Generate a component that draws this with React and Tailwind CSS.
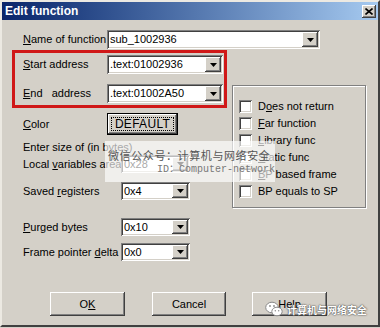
const raised =
  'shadow-[inset_-1px_-1px_0_#404040,inset_1px_1px_0_#ffffff,inset_-2px_-2px_0_#808080,inset_2px_2px_0_#d4d0c8]';
const sunken =
  'shadow-[inset_1px_1px_0_#808080,inset_-1px_-1px_0_#ffffff,inset_2px_2px_0_#404040,inset_-2px_-2px_0_#d4d0c8]';

function Combo({ value, className }) {
  return (
    <div className={`flex bg-white p-[2px] ${sunken} ${className}`}>
      <div className="flex-1 pl-[1px] flex items-center whitespace-nowrap overflow-hidden">{value}</div>
      <div className={`w-[16px] bg-[#d4d0c8] flex items-center justify-center ${raised}`}>
        <svg width="7" height="4" viewBox="0 0 7 4">
          <path d="M0 0h7L3.5 4z" fill="#000" />
        </svg>
      </div>
    </div>
  );
}

function Check({ children }) {
  return (
    <div className="h-[17px] flex items-center">
      <div className={`w-[13px] h-[13px] bg-white ${sunken}`} />
      <span className="ml-[6px] whitespace-nowrap">{children}</span>
    </div>
  );
}

function Btn({ children, className }) {
  return (
    <div className={`h-[24px] bg-[#d4d0c8] flex items-center justify-center ${raised} ${className}`}>
      {children}
    </div>
  );
}

function WeChat() {
  return (
    <svg width="18" height="16" viewBox="0 0 18 16">
      <ellipse cx="7" cy="6.5" rx="6.3" ry="5.3" fill="#fff" stroke="#888" strokeWidth="1" />
      <ellipse cx="12" cy="10.5" rx="5.2" ry="4.3" fill="#fff" stroke="#888" strokeWidth="1" />
      <circle cx="5" cy="5" r="0.9" fill="#888" />
      <circle cx="9" cy="5" r="0.9" fill="#888" />
      <circle cx="10.3" cy="9.8" r="0.7" fill="#888" />
      <circle cx="13.7" cy="9.8" r="0.7" fill="#888" />
    </svg>
  );
}

export default function App() {
  return (
    <div className="relative w-[380px] h-[328px] bg-[#d4d0c8] overflow-hidden font-['Liberation_Sans',Arial,sans-serif] text-[11px] text-black">
      <div className="h-[327px] border-2 border-t-[#ece9e2] border-l-[#ece9e2] border-r-[#404040] border-b-[#404040]">
        {/* title bar */}
        <div className="h-[18px] flex items-center pl-[3px] pr-[2px] bg-linear-to-r from-[#0a246a] to-[#a6caf0]">
          <span className="flex-1 text-white font-bold text-[12px]">Edit function</span>
          <div className={`w-[14px] h-[13px] bg-[#d4d0c8] flex items-center justify-center ${raised}`}>
            <svg width="8" height="7" viewBox="0 0 8 7">
              <path d="M0.5 0.5L7.5 6.5M7.5 0.5L0.5 6.5" stroke="#000" strokeWidth="1.6" />
            </svg>
          </div>
        </div>

        <div className="flex items-center mt-[10px] pl-[21px]">
          <span className="w-[84px]">
            <u>N</u>ame of function
          </span>
          <Combo value="sub_1002936" className="w-[213px] h-[19px]" />
        </div>

        <div className="flex items-start mt-[1px]">
          <div className="ml-[10px] w-[215px]">
            <div className="h-[58px] border-[3px] border-[#d01818] pt-[2px] pl-[8px]">
              <div className="flex items-center">
                <span className="w-[84px]">
                  <u>S</u>tart address
                </span>
                <Combo value=".text:01002936" className="w-[116px] h-[19px]" />
              </div>
              <div className="flex items-center mt-[10px]">
                <span className="w-[84px] whitespace-pre">
                  <u>E</u>nd   address
                </span>
                <Combo value=".text:01002A50" className="w-[116px] h-[19px]" />
              </div>
            </div>

            <div className="flex items-center mt-[5px] pl-[11px]">
              <span className="w-[84px]">
                <u>C</u>olor
              </span>
              <div className="w-[71px] h-[22px] border border-black bg-[#d4d0c8]">
                <div className={`h-full p-[3px] ${raised}`}>
                  <div className="h-full border border-dotted border-black flex items-center justify-center text-[12px] tracking-[0.3px]">
                    DEFAULT
                  </div>
                </div>
              </div>
            </div>

            <div className="mt-[6px] pl-[11px] leading-[12px]">Enter size of (in bytes)</div>
            <div className="flex items-center mt-[2px] pl-[11px]">
              <span className="w-[98px] whitespace-nowrap">
                Local <u>v</u>ariables area
              </span>
              <Combo value="0x28" className="w-[69px] h-[18px]" />
            </div>
            <div className="flex items-center mt-[9px] pl-[11px]">
              <span className="w-[98px]">
                Saved <u>r</u>egisters
              </span>
              <Combo value="0x4" className="w-[69px] h-[18px]" />
            </div>
            <div className="flex items-center mt-[18px] pl-[11px]">
              <span className="w-[98px]">
                <u>P</u>urged bytes
              </span>
              <Combo value="0x10" className="w-[69px] h-[18px]" />
            </div>
            <div className="flex items-center mt-[7px] pl-[11px]">
              <span className="w-[98px]">
                Frame pointer <u>d</u>elta
              </span>
              <Combo value="0x0" className="w-[69px] h-[18px]" />
            </div>
          </div>

          <div className="ml-[5px] mt-[35px] w-[134px] h-[123px] border border-[#808080] shadow-[1px_1px_0_#ffffff,inset_1px_1px_0_#ffffff] pl-[6px] pt-[12px]">
            <Check>
              D<u>o</u>es not return
            </Check>
            <Check>
              <u>F</u>ar function
            </Check>
            <Check>
              <u>L</u>ibrary func
            </Check>
            <Check>
              <u>S</u>tatic func
            </Check>
            <Check>
              <u>B</u>P based frame
            </Check>
            <Check>BP equals to SP</Check>
          </div>
        </div>

        <div className="flex mt-[31px] pl-[48px]">
          <Btn className="w-[75px]">
            O<u>K</u>
          </Btn>
          <Btn className="w-[74px] ml-[27px]">Cancel</Btn>
          <Btn className="w-[75px] ml-[26px]">Help</Btn>
        </div>
      </div>

      {/* watermark box */}
      <div className="absolute left-[105px] top-[141px] w-[170px] h-[41px] bg-white/65 text-[#555]">
        <div className="mt-[8px] ml-[3px] text-[11px] leading-[13px] tracking-[0.6px] whitespace-nowrap font-['Noto_Sans_CJK_SC',sans-serif]">
          微信公众号：计算机与网络安全
        </div>
        <div className="ml-[52px] mt-[2px] text-[10px] leading-[12px] text-[#777] whitespace-nowrap font-['Liberation_Mono','Noto_Sans_CJK_SC',monospace]">
          ID：Computer-network
        </div>
      </div>

      <div className="absolute left-[265px] top-[301px] flex items-center">
        <WeChat />
        <span className="ml-[4px] text-white text-[10px] font-bold whitespace-nowrap font-['Noto_Sans_CJK_SC',sans-serif] [text-shadow:0_0_2px_#444,0_0_1px_#444]">
          计算机与网络安全
        </span>
      </div>
    </div>
  );
}
